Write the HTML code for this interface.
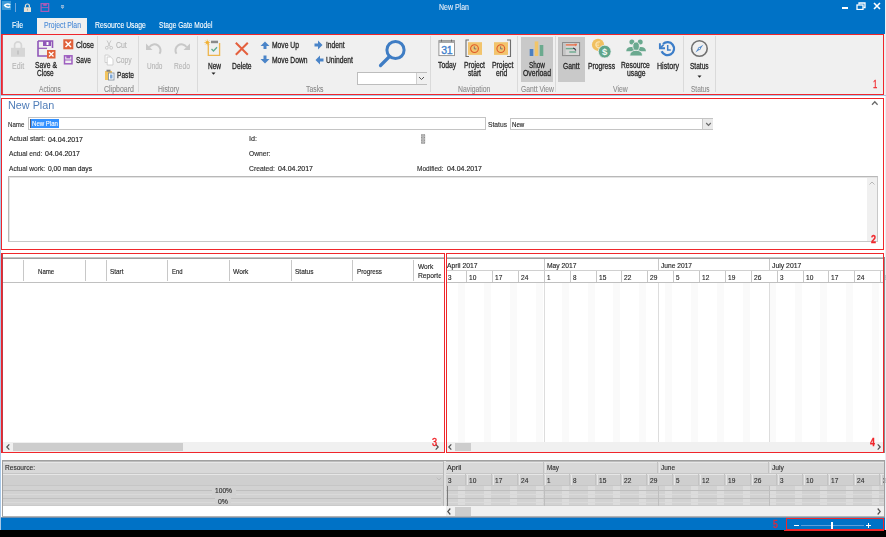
<!DOCTYPE html><html><head><meta charset="utf-8"><style>
html,body{margin:0;padding:0;}
body{width:886px;height:537px;position:relative;overflow:hidden;background:#000;font-family:"Liberation Sans",sans-serif;}
body>div{position:absolute;}
.g{-webkit-text-stroke-width:0.1px !important;}
.s{-webkit-text-stroke-width:0.15px !important;}
.t{white-space:nowrap;-webkit-text-stroke:0.28px currentColor;filter:blur(0.25px);}
</style></head><body>
<div style="left:0px;top:0px;width:886px;height:537px;background:#000;"></div>
<div style="left:0px;top:0px;width:886px;height:530px;background:#FFFFFF;"></div>
<div style="left:1px;top:0px;width:884px;height:34px;background:#0072C6;"></div>
<div style="left:0px;top:0px;width:1px;height:530px;background:#A7C7E7;"></div>
<div style="left:885px;top:0px;width:1px;height:530px;background:#E8EEF4;"></div>
<div style="left:2px;top:1px;width:9px;height:9px;background:#3D9AD6;"></div>
<svg style="position:absolute;left:2px;top:1px;" width="9" height="9" viewBox="0 0 9 9"><path d="M8.2 4 C7 2.6 4.2 2.4 2.6 4.2 C4 6.2 6.6 6.6 8.2 5.6" fill="none" stroke="#FFF" stroke-width="1.5"/></svg>
<div style="left:15px;top:3px;width:1px;height:9px;background:#6FA6DA;"></div>
<svg style="position:absolute;left:23px;top:3px;" width="10" height="10" viewBox="0 0 10 10"><rect x="0.9" y="4.3" width="7.1" height="4.7" fill="#E6E1D6"/><path d="M2.4 4.6 V3 A2 2 0 0 1 6.4 3 V4.6" fill="none" stroke="#E6E1D6" stroke-width="1.2"/><rect x="4" y="5.6" width="0.9" height="2" fill="#A8A49C"/></svg>
<svg style="position:absolute;left:40px;top:3px;" width="10" height="10" viewBox="0 0 10 10"><rect x="1.1" y="0.6" width="7.6" height="7.8" fill="none" stroke="#A95BB8" stroke-width="1.2"/><rect x="3.2" y="0.6" width="3.6" height="2.2" fill="#A95BB8"/><line x1="1.1" y1="4.6" x2="8.7" y2="4.6" stroke="#A95BB8" stroke-width="0.9"/></svg>
<svg style="position:absolute;left:59px;top:4px;" width="6" height="6" viewBox="0 0 6 6"><path d="M2 2.8 L5 2.8 L3.5 4.6 Z" fill="#8AA8C8" stroke="#C8D8EA" stroke-width="0.5"/><line x1="2" y1="1.5" x2="5" y2="1.5" stroke="#C8D4E4" stroke-width="0.7"/></svg>
<div class="t g" style="left:439.00px;top:4.00px;font-size:8.2px;line-height:8.2px;color:#E6EEF8;transform:scaleX(0.855);transform-origin:0 0;">New Plan</div>
<div style="left:842px;top:7px;width:6px;height:2px;background:#FFFFFF;"></div>
<svg style="position:absolute;left:856px;top:2px;" width="10" height="8" viewBox="0 0 10 8"><rect x="1" y="3" width="6" height="4.5" fill="none" stroke="#FFF" stroke-width="1.3"/><path d="M3 2.5 V1 H9 V5.5 H7.5" fill="none" stroke="#FFF" stroke-width="1.3"/></svg>
<svg style="position:absolute;left:873px;top:2px;" width="8" height="8" viewBox="0 0 8 8"><path d="M1 1 L7 7 M7 1 L1 7" stroke="#FFF" stroke-width="1.6"/></svg>
<div class="t g" style="left:11.90px;top:22.00px;font-size:8.2px;line-height:8.2px;color:#FFFFFF;transform:scaleX(0.848);transform-origin:0 0;">File</div>
<div style="left:37px;top:18px;width:50px;height:16px;background:#F0F0F0;"></div>
<div class="t g" style="left:43.80px;top:22.00px;font-size:8.2px;line-height:8.2px;color:#4A8AD6;transform:scaleX(0.837);transform-origin:0 0;">Project Plan</div>
<div class="t g" style="left:94.60px;top:22.00px;font-size:8.2px;line-height:8.2px;color:#FFFFFF;transform:scaleX(0.835);transform-origin:0 0;">Resource Usage</div>
<div class="t g" style="left:159.30px;top:22.00px;font-size:8.2px;line-height:8.2px;color:#FFFFFF;transform:scaleX(0.809);transform-origin:0 0;">Stage Gate Model</div>
<div style="left:1px;top:34px;width:884px;height:61px;background:#F0F0F0;"></div>
<div style="left:0px;top:95px;width:886px;height:1px;background:#A9C6E6;"></div>
<div style="left:97px;top:36px;width:1px;height:56px;background:#DADADA;"></div>
<div style="left:138px;top:36px;width:1px;height:56px;background:#DADADA;"></div>
<div style="left:197px;top:36px;width:1px;height:56px;background:#DADADA;"></div>
<div style="left:430px;top:36px;width:1px;height:56px;background:#DADADA;"></div>
<div style="left:517px;top:36px;width:1px;height:56px;background:#DADADA;"></div>
<div style="left:555px;top:36px;width:1px;height:56px;background:#DADADA;"></div>
<div style="left:683px;top:36px;width:1px;height:56px;background:#DADADA;"></div>
<div style="left:715px;top:36px;width:1px;height:56px;background:#DADADA;"></div>
<div style="left:521px;top:37px;width:32px;height:45px;background:#C9C9C9;"></div>
<div style="left:558px;top:37px;width:27px;height:45px;background:#C9C9C9;"></div>
<div class="t g" style="left:38.70px;top:85.00px;font-size:8.4px;line-height:8.4px;color:#8A8A8A;transform:scaleX(0.798);transform-origin:0 0;">Actions</div>
<div class="t g" style="left:103.60px;top:85.00px;font-size:8.4px;line-height:8.4px;color:#8A8A8A;transform:scaleX(0.834);transform-origin:0 0;">Clipboard</div>
<div class="t g" style="left:158.00px;top:85.00px;font-size:8.4px;line-height:8.4px;color:#8A8A8A;transform:scaleX(0.815);transform-origin:0 0;">History</div>
<div class="t g" style="left:306.00px;top:85.00px;font-size:8.4px;line-height:8.4px;color:#8A8A8A;transform:scaleX(0.820);transform-origin:0 0;">Tasks</div>
<div class="t g" style="left:458.40px;top:85.00px;font-size:8.4px;line-height:8.4px;color:#8A8A8A;transform:scaleX(0.816);transform-origin:0 0;">Navigation</div>
<div class="t g" style="left:520.50px;top:85.00px;font-size:8.4px;line-height:8.4px;color:#8A8A8A;transform:scaleX(0.806);transform-origin:0 0;">Gantt View</div>
<div class="t g" style="left:613.00px;top:85.00px;font-size:8.4px;line-height:8.4px;color:#8A8A8A;transform:scaleX(0.814);transform-origin:0 0;">View</div>
<div class="t g" style="left:690.50px;top:85.00px;font-size:8.4px;line-height:8.4px;color:#8A8A8A;transform:scaleX(0.777);transform-origin:0 0;">Status</div>
<svg style="position:absolute;left:10px;top:40px;" width="16" height="18" viewBox="0 0 16 18"><rect x="1" y="7.8" width="14" height="9" fill="#D6D6D6"/><path d="M4.6 8 V5.3 A3.4 3.4 0 0 1 11.4 5.3 V8" fill="none" stroke="#D6D6D6" stroke-width="1.7"/><rect x="7.3" y="10.5" width="1.4" height="4" fill="#BDBDBD"/></svg>
<div class="t g" style="left:11.50px;top:62.00px;font-size:8.4px;line-height:8.4px;color:#B4B4B4;transform:scaleX(0.842);transform-origin:0 0;">Edit</div>
<svg style="position:absolute;left:37px;top:40px;" width="20" height="20" viewBox="0 0 20 20"><path d="M1 1 H15.5 V8" fill="none" stroke="#9057B8" stroke-width="1.6"/><path d="M1 1 V16 H10" fill="none" stroke="#9057B8" stroke-width="1.6"/><rect x="6" y="1" width="8" height="5" fill="#9057B8"/><rect x="9.5" y="2" width="2" height="3" fill="#FFF"/><line x1="1" y1="8.3" x2="10" y2="8.3" stroke="#9057B8" stroke-width="1.2"/><rect x="10" y="10" width="8.5" height="8.5" fill="#E0603A"/><path d="M12 12 L16.5 16.5 M16.5 12 L12 16.5" stroke="#FFF" stroke-width="1.3"/></svg>
<div class="t" style="left:34.60px;top:61.00px;font-size:8.4px;line-height:8.4px;color:#262626;transform:scaleX(0.812);transform-origin:0 0;">Save &amp;</div>
<div class="t" style="left:37.00px;top:69.00px;font-size:8.4px;line-height:8.4px;color:#262626;transform:scaleX(0.778);transform-origin:0 0;">Close</div>
<svg style="position:absolute;left:63px;top:39px;" width="11" height="11" viewBox="0 0 11 11"><rect x="0.3" y="0.3" width="10" height="10" fill="#E0603A"/><path d="M2.5 2.5 L8 8 M8 2.5 L2.5 8" stroke="#FFF" stroke-width="1.5"/></svg>
<div class="t" style="left:75.60px;top:41.00px;font-size:8.4px;line-height:8.4px;color:#262626;transform:scaleX(0.839);transform-origin:0 0;">Close</div>
<svg style="position:absolute;left:63px;top:55px;" width="10" height="10" viewBox="0 0 10 10"><rect x="1.5" y="0.8" width="7.5" height="8" fill="none" stroke="#9E5FC0" stroke-width="1.5"/><rect x="3.3" y="0.8" width="4" height="2.6" fill="#9E5FC0"/><line x1="1.5" y1="5" x2="9" y2="5" stroke="#9E5FC0" stroke-width="1"/></svg>
<div class="t" style="left:76.00px;top:56.00px;font-size:8.4px;line-height:8.4px;color:#262626;transform:scaleX(0.783);transform-origin:0 0;">Save</div>
<svg style="position:absolute;left:104px;top:40px;" width="10" height="10" viewBox="0 0 10 10"><path d="M3 0.5 L6.3 6.8 M7 0.5 L3.7 6.8" stroke="#C4C4C4" stroke-width="0.9" fill="none"/><circle cx="2.8" cy="7.8" r="1.4" fill="none" stroke="#C4C4C4" stroke-width="0.9"/><circle cx="7.2" cy="7.8" r="1.4" fill="none" stroke="#C4C4C4" stroke-width="0.9"/></svg>
<div class="t g" style="left:116.00px;top:41.00px;font-size:8.4px;line-height:8.4px;color:#B4B4B4;transform:scaleX(0.827);transform-origin:0 0;">Cut</div>
<svg style="position:absolute;left:104px;top:54px;" width="10" height="12" viewBox="0 0 10 12"><path d="M1 1 H4.5 L6.5 3 V8.5 H1 Z" fill="#FAFAFA" stroke="#C8C8C8" stroke-width="0.8"/><path d="M3.2 3 H6.7 L9 5.3 V11 H3.2 Z" fill="#FFF" stroke="#C8C8C8" stroke-width="0.8"/></svg>
<div class="t g" style="left:116.00px;top:56.00px;font-size:8.4px;line-height:8.4px;color:#B4B4B4;transform:scaleX(0.800);transform-origin:0 0;">Copy</div>
<svg style="position:absolute;left:104px;top:69px;" width="11" height="12" viewBox="0 0 11 12"><rect x="1" y="2" width="7" height="9" fill="#F2C45E"/><rect x="2.5" y="0.7" width="4" height="2" fill="#808080"/><rect x="4.5" y="4" width="5.5" height="7" fill="#FFF" stroke="#7A8A9A" stroke-width="0.8"/><rect x="6" y="5.5" width="2.5" height="4" fill="#7FA8D8"/></svg>
<div class="t" style="left:116.50px;top:71.00px;font-size:8.4px;line-height:8.4px;color:#262626;transform:scaleX(0.792);transform-origin:0 0;">Paste</div>
<svg style="position:absolute;left:145px;top:41px;" width="18" height="15" viewBox="0 0 18 15"><path d="M4.5 6 A6 6 0 1 1 14.5 12.8" fill="none" stroke="#C8C8C8" stroke-width="2"/><path d="M1 2.5 L1 9 L7.5 9 Z" fill="#C8C8C8"/></svg>
<div class="t g" style="left:146.80px;top:62.00px;font-size:8.4px;line-height:8.4px;color:#B4B4B4;transform:scaleX(0.772);transform-origin:0 0;">Undo</div>
<svg style="position:absolute;left:173px;top:41px;" width="18" height="15" viewBox="0 0 18 15"><path d="M13.5 6 A6 6 0 1 0 3.5 12.8" fill="none" stroke="#C8C8C8" stroke-width="2"/><path d="M17 2.5 L17 9 L10.5 9 Z" fill="#C8C8C8"/></svg>
<div class="t g" style="left:174.20px;top:62.00px;font-size:8.4px;line-height:8.4px;color:#B4B4B4;transform:scaleX(0.792);transform-origin:0 0;">Redo</div>
<svg style="position:absolute;left:203px;top:38px;" width="19" height="19" viewBox="0 0 19 19"><circle cx="4.3" cy="4.5" r="1.5" fill="#F2B134"/><path d="M4.3 1.6 V7.4 M1.4 4.5 H7.2 M2.3 2.5 L6.3 6.5 M6.3 2.5 L2.3 6.5" stroke="#F2B134" stroke-width="0.7"/><path d="M5.3 5 V17.4 H16.6 V5" fill="none" stroke="#EDB64E" stroke-width="1.3"/><rect x="8" y="2.7" width="7" height="2.5" fill="#8A8A8A"/><path d="M8.5 11 L10.5 13 L14 9.3" fill="none" stroke="#5EAA8C" stroke-width="1.3"/></svg>
<div class="t" style="left:207.80px;top:62.00px;font-size:8.4px;line-height:8.4px;color:#262626;transform:scaleX(0.778);transform-origin:0 0;">New</div>
<svg style="position:absolute;left:211px;top:72px;" width="5" height="3" viewBox="0 0 5 3"><path d="M0.5 0.5 H4.5 L2.5 2.8 Z" fill="#222"/></svg>
<svg style="position:absolute;left:234px;top:41px;" width="16" height="16" viewBox="0 0 16 16"><path d="M1.8 1.8 L13.8 13.8 M13.8 1.8 L1.8 13.8" stroke="#E4603E" stroke-width="2"/></svg>
<div class="t" style="left:232.00px;top:62.00px;font-size:8.4px;line-height:8.4px;color:#262626;transform:scaleX(0.807);transform-origin:0 0;">Delete</div>
<svg style="position:absolute;left:260px;top:40.5px;" width="10" height="9" viewBox="0 0 10 9"><path d="M5 0.5 L9.5 5 H6.5 V8 H3.5 V5 H0.5 Z" fill="#4A84C8"/></svg>
<div class="t" style="left:271.80px;top:41.00px;font-size:8.4px;line-height:8.4px;color:#262626;transform:scaleX(0.804);transform-origin:0 0;">Move Up</div>
<svg style="position:absolute;left:260px;top:55px;" width="10" height="9" viewBox="0 0 10 9"><path d="M5 8.5 L9.5 4 H6.5 V0.5 H3.5 V4 H0.5 Z" fill="#4A84C8"/></svg>
<div class="t" style="left:271.80px;top:56.00px;font-size:8.4px;line-height:8.4px;color:#262626;transform:scaleX(0.803);transform-origin:0 0;">Move Down</div>
<svg style="position:absolute;left:314px;top:40px;" width="9" height="10" viewBox="0 0 9 10"><path d="M8.5 5 L4 0.5 V3.5 H0.5 V6.5 H4 V9.5 Z" fill="#4A84C8"/></svg>
<div class="t" style="left:326.00px;top:41.00px;font-size:8.4px;line-height:8.4px;color:#262626;transform:scaleX(0.797);transform-origin:0 0;">Indent</div>
<svg style="position:absolute;left:315px;top:55px;" width="9" height="10" viewBox="0 0 9 10"><path d="M0.5 5 L5 0.5 V3.5 H8.5 V6.5 H5 V9.5 Z" fill="#4A84C8"/></svg>
<div class="t" style="left:326.00px;top:56.00px;font-size:8.4px;line-height:8.4px;color:#262626;transform:scaleX(0.803);transform-origin:0 0;">Unindent</div>
<svg style="position:absolute;left:377px;top:39px;" width="32" height="30" viewBox="0 0 32 30"><circle cx="18.5" cy="11" r="8.6" fill="none" stroke="#3F7DC4" stroke-width="3"/><path d="M12.5 17.5 L3.5 26.5" stroke="#3F7DC4" stroke-width="3.2" stroke-linecap="round"/></svg>
<div style="left:357px;top:72px;width:70px;height:13px;box-sizing:border-box;border:1px solid #BDBDBD;background:#FFF;"></div>
<div style="left:416px;top:73px;width:10px;height:11px;background:#F0F0F0;border-left:1px solid #D0D0D0"></div>
<svg style="position:absolute;left:418px;top:76px;" width="7" height="5" viewBox="0 0 7 5"><path d="M1 1 L3.5 3.5 L6 1" fill="none" stroke="#555" stroke-width="1"/></svg>
<svg style="position:absolute;left:438px;top:39px;" width="18" height="18" viewBox="0 0 18 18"><rect x="0.9" y="1.6" width="15.6" height="15" fill="#FFF" stroke="#8C8C8C" stroke-width="0.9"/><rect x="0.9" y="1.6" width="15.6" height="2.4" fill="#A8A8A8"/><rect x="3" y="0.6" width="1" height="2" fill="#6A6A6A"/><rect x="13" y="0.6" width="1" height="2" fill="#6A6A6A"/><text x="8.7" y="14.8" font-size="10.5" font-family="Liberation Sans" fill="#3F7FCC" text-anchor="middle" letter-spacing="-0.3" stroke="#3F7FCC" stroke-width="0.35">31</text></svg>
<div class="t" style="left:437.80px;top:61.00px;font-size:8.4px;line-height:8.4px;color:#262626;transform:scaleX(0.811);transform-origin:0 0;">Today</div>
<svg style="position:absolute;left:465px;top:39px;" width="19" height="19" viewBox="0 0 19 19"><path d="M4 1 H1 V17.5 H4" fill="none" stroke="#6E6E6E" stroke-width="1.1"/><rect x="3" y="3.2" width="14" height="12.7" fill="#F2C46D"/><circle cx="9.5" cy="9.6" r="3.9" fill="none" stroke="#E05A2A" stroke-width="1.1"/><path d="M9.3 7.4 V9.9 H11.3" fill="none" stroke="#606070" stroke-width="0.8"/></svg>
<div class="t" style="left:464.00px;top:61.00px;font-size:8.4px;line-height:8.4px;color:#262626;transform:scaleX(0.804);transform-origin:0 0;">Project</div>
<div class="t" style="left:468.00px;top:69.00px;font-size:8.4px;line-height:8.4px;color:#262626;transform:scaleX(0.796);transform-origin:0 0;">start</div>
<svg style="position:absolute;left:493px;top:39px;" width="19" height="19" viewBox="0 0 19 19"><path d="M14 1 H17.5 V17.5 H14" fill="none" stroke="#6E6E6E" stroke-width="1.1"/><rect x="1" y="3.2" width="14" height="12.7" fill="#F2C46D"/><circle cx="7.8" cy="9.6" r="3.9" fill="none" stroke="#E05A2A" stroke-width="1.1"/><path d="M7.6 7.4 V9.9 H9.6" fill="none" stroke="#606070" stroke-width="0.8"/></svg>
<div class="t" style="left:491.60px;top:61.00px;font-size:8.4px;line-height:8.4px;color:#262626;transform:scaleX(0.819);transform-origin:0 0;">Project</div>
<div class="t" style="left:496.00px;top:69.00px;font-size:8.4px;line-height:8.4px;color:#262626;transform:scaleX(0.813);transform-origin:0 0;">end</div>
<svg style="position:absolute;left:529px;top:41px;" width="15" height="16" viewBox="0 0 15 16"><rect x="0.7" y="8" width="3.6" height="7" fill="#4A7FC1"/><rect x="5.7" y="0.4" width="3.6" height="14.6" fill="#F1C56A"/><rect x="10.7" y="4" width="3.6" height="11" fill="#6BAA8E"/></svg>
<div class="t" style="left:528.50px;top:61.00px;font-size:8.4px;line-height:8.4px;color:#262626;transform:scaleX(0.760);transform-origin:0 0;">Show</div>
<div class="t" style="left:522.70px;top:69.00px;font-size:8.4px;line-height:8.4px;color:#262626;transform:scaleX(0.824);transform-origin:0 0;">Overload</div>
<svg style="position:absolute;left:562px;top:41px;" width="19" height="16" viewBox="0 0 19 16"><rect x="0.6" y="1.6" width="17" height="13" fill="#D6D6D6" stroke="#858585" stroke-width="1"/><rect x="1.1" y="2.1" width="2.6" height="12" fill="#C4C4C4"/><rect x="3.8" y="3.2" width="10.5" height="1.4" fill="#E8704A"/><path d="M12.3 2.8 L15.3 2.8 L13.8 5.6 Z" fill="#E8704A"/><rect x="3.8" y="6.9" width="7.5" height="1.4" fill="#6BAA8E"/><path d="M11 7.2 Q13 7.2 13.8 9.5" fill="none" stroke="#3A3A48" stroke-width="1.2"/><rect x="7.3" y="10.3" width="6.8" height="1.4" fill="#6BAA8E"/></svg>
<div class="t" style="left:563.40px;top:62.00px;font-size:8.4px;line-height:8.4px;color:#262626;transform:scaleX(0.808);transform-origin:0 0;">Gantt</div>
<svg style="position:absolute;left:590px;top:37px;" width="23" height="22" viewBox="0 0 23 22"><circle cx="8" cy="7.8" r="6.1" fill="#F0C060"/><path d="M10 5 A3 3 0 1 0 10 10.6" fill="none" stroke="#FAE3B0" stroke-width="1.2"/><path d="M5.4 7 H9 M5.4 8.6 H9" stroke="#FAE3B0" stroke-width="0.7"/><circle cx="14.7" cy="14.6" r="6.4" fill="#5FA58A" stroke="#F0F0F0" stroke-width="0.8"/><text x="14.7" y="18.2" font-size="9.5" font-family="Liberation Sans" fill="#F4FAF6" text-anchor="middle" font-weight="bold">$</text></svg>
<div class="t" style="left:588.40px;top:62.00px;font-size:8.4px;line-height:8.4px;color:#262626;transform:scaleX(0.810);transform-origin:0 0;">Progress</div>
<svg style="position:absolute;left:625px;top:38px;" width="22" height="19" viewBox="0 0 22 19"><circle cx="6.9" cy="3.9" r="2.5" fill="#6AA98F"/><circle cx="15.2" cy="3.9" r="2.5" fill="#6AA98F"/><path d="M1.2 13.2 Q1.6 9 6 9 L16 9 Q20.5 9 21 13.2 Z" fill="#6AA98F"/><ellipse cx="11.1" cy="8.2" rx="3.3" ry="4.3" fill="#6AA98F" stroke="#F0F0F0" stroke-width="0.9"/><path d="M4.6 18 Q5 12.3 11.1 12.3 Q17.2 12.3 17.7 18 Z" fill="#6AA98F" stroke="#F0F0F0" stroke-width="0.9"/></svg>
<div class="t" style="left:621.40px;top:61.00px;font-size:8.4px;line-height:8.4px;color:#262626;transform:scaleX(0.801);transform-origin:0 0;">Resource</div>
<div class="t" style="left:626.80px;top:69.00px;font-size:8.4px;line-height:8.4px;color:#262626;transform:scaleX(0.813);transform-origin:0 0;">usage</div>
<svg style="position:absolute;left:658px;top:39px;" width="19" height="19" viewBox="0 0 19 19"><path d="M5 5 A6.5 6.5 0 1 1 3.6 12.3" fill="none" stroke="#3D7EC9" stroke-width="2.3"/><path d="M5.6 5.6 L2.6 8.6" stroke="#3D7EC9" stroke-width="1.6"/><path d="M1.9 4.2 V9.3 H7" fill="none" stroke="#3D7EC9" stroke-width="1.9"/><path d="M9.7 6 V10.9 H12.8" fill="none" stroke="#3D7EC9" stroke-width="1.5"/></svg>
<div class="t" style="left:656.50px;top:62.00px;font-size:8.4px;line-height:8.4px;color:#262626;transform:scaleX(0.846);transform-origin:0 0;">History</div>
<svg style="position:absolute;left:690px;top:39px;" width="19" height="19" viewBox="0 0 19 19"><circle cx="9.4" cy="9.5" r="7.8" fill="none" stroke="#707070" stroke-width="1.6"/><path d="M13.4 5.5 L10.2 10.3 L5.4 13.5 L8.6 8.7 Z" fill="#4A84C8"/><circle cx="9.4" cy="9.5" r="1.1" fill="#F0F0F0" stroke="#4A84C8" stroke-width="0.7"/></svg>
<div class="t" style="left:689.70px;top:62.00px;font-size:8.4px;line-height:8.4px;color:#262626;transform:scaleX(0.781);transform-origin:0 0;">Status</div>
<svg style="position:absolute;left:697px;top:75px;" width="5" height="3" viewBox="0 0 5 3"><path d="M0.5 0.5 H4.5 L2.5 2.8 Z" fill="#222"/></svg>
<div class="t" style="left:7.50px;top:100.00px;font-size:11px;line-height:11px;color:#4F7DB8;transform:scaleX(0.983);transform-origin:0 0;-webkit-text-stroke:0">New Plan</div>
<svg style="position:absolute;left:871px;top:100px;" width="8" height="6" viewBox="0 0 8 6"><path d="M1 4.8 L3.8 1.8 L6.6 4.8" fill="none" stroke="#6A6A6A" stroke-width="1.3"/></svg>
<div class="t s" style="left:7.90px;top:121.00px;font-size:7.6px;line-height:7.6px;color:#303030;transform:scaleX(0.808);transform-origin:0 0;">Name</div>
<div style="left:28px;top:117px;width:458px;height:13px;box-sizing:border-box;border:1px solid #C4C4C4;background:#FFF;"></div>
<div style="left:31px;top:119px;width:28px;height:9px;background:#3391FF;"></div>
<div style="left:30px;top:119px;width:1px;height:9px;background:#5A5A70;"></div>
<div class="t g" style="left:31.50px;top:120.00px;font-size:7.6px;line-height:7.6px;color:#FFFFFF;transform:scaleX(0.799);transform-origin:0 0;">New Plan</div>
<div class="t s" style="left:488.00px;top:121.00px;font-size:7.6px;line-height:7.6px;color:#303030;transform:scaleX(0.882);transform-origin:0 0;">Status</div>
<div style="left:510px;top:118px;width:203px;height:12px;box-sizing:border-box;border:1px solid #C4C4C4;background:#FFF;"></div>
<div style="left:702px;top:119px;width:10px;height:10px;background:#EAEAEA;border-left:1px solid #C8C8C8"></div>
<svg style="position:absolute;left:704.5px;top:121.5px;" width="7" height="5" viewBox="0 0 7 5"><path d="M1.2 1 L3.5 3.3 L5.8 1" fill="none" stroke="#6A6A6A" stroke-width="1.2"/></svg>
<div class="t s" style="left:512.40px;top:121.00px;font-size:7.6px;line-height:7.6px;color:#202020;transform:scaleX(0.807);transform-origin:0 0;">New</div>
<div class="t s" style="left:8.50px;top:135.00px;font-size:7.6px;line-height:7.6px;color:#303030;transform:scaleX(0.900);transform-origin:0 0;">Actual start:</div>
<div class="t s" style="left:48.00px;top:136.00px;font-size:7.6px;line-height:7.6px;color:#202020;transform:scaleX(0.920);transform-origin:0 0;">04.04.2017</div>
<div class="t s" style="left:8.50px;top:150.00px;font-size:7.6px;line-height:7.6px;color:#303030;transform:scaleX(0.875);transform-origin:0 0;">Actual end:</div>
<div class="t s" style="left:45.00px;top:150.00px;font-size:7.6px;line-height:7.6px;color:#202020;transform:scaleX(0.920);transform-origin:0 0;">04.04.2017</div>
<div class="t s" style="left:8.50px;top:165.00px;font-size:7.6px;line-height:7.6px;color:#303030;transform:scaleX(0.872);transform-origin:0 0;">Actual work:</div>
<div class="t s" style="left:48.00px;top:165.00px;font-size:7.6px;line-height:7.6px;color:#202020;transform:scaleX(0.883);transform-origin:0 0;">0,00 man days</div>
<div class="t s" style="left:249.00px;top:135.00px;font-size:7.6px;line-height:7.6px;color:#303030;transform:scaleX(0.948);transform-origin:0 0;">Id:</div>
<div class="t s" style="left:249.00px;top:150.00px;font-size:7.6px;line-height:7.6px;color:#303030;transform:scaleX(0.877);transform-origin:0 0;">Owner:</div>
<div class="t s" style="left:249.00px;top:165.00px;font-size:7.6px;line-height:7.6px;color:#303030;transform:scaleX(0.892);transform-origin:0 0;">Created:</div>
<div class="t s" style="left:278.40px;top:165.00px;font-size:7.6px;line-height:7.6px;color:#202020;transform:scaleX(0.920);transform-origin:0 0;">04.04.2017</div>
<div class="t s" style="left:417.00px;top:165.00px;font-size:7.6px;line-height:7.6px;color:#303030;transform:scaleX(0.859);transform-origin:0 0;">Modified:</div>
<div class="t s" style="left:447.00px;top:165.00px;font-size:7.6px;line-height:7.6px;color:#202020;transform:scaleX(0.920);transform-origin:0 0;">04.04.2017</div>
<svg style="position:absolute;left:420px;top:133px;" width="6" height="12" viewBox="0 0 6 12"><rect x="1" y="1" width="4.2" height="10" rx="1" fill="#B8B8B8"/><g fill="#8E8E8E"><rect x="1.2" y="1.5" width="1" height="1"/><rect x="4" y="1.5" width="1" height="1"/><rect x="1.2" y="4" width="1" height="1"/><rect x="4" y="4" width="1" height="1"/><rect x="1.2" y="6.8" width="1" height="1"/><rect x="4" y="6.8" width="1" height="1"/><rect x="1.2" y="9.3" width="1" height="1"/><rect x="4" y="9.3" width="1" height="1"/></g></svg>
<div style="left:8px;top:176px;width:870px;height:66px;box-sizing:border-box;border:1px solid #C8C8C8;background:#FFF;border-top-color:#B8B8B8;border-left-color:#B8B8B8"></div>
<div style="left:9px;top:177px;width:868px;height:1px;background:#E4E4E4;"></div>
<div style="left:9px;top:177px;width:1px;height:64px;background:#E4E4E4;"></div>
<div style="left:867px;top:178px;width:10px;height:63px;background:#F0F0F0;"></div>
<svg style="position:absolute;left:868px;top:180px;" width="8" height="6" viewBox="0 0 8 6"><path d="M1.5 4.5 L4 2 L6.5 4.5" fill="none" stroke="#B0B0B0" stroke-width="0.9"/></svg>
<div style="left:1px;top:98px;width:883px;height:152px;box-sizing:border-box;border:1px solid #F0262B;background:transparent;"></div>
<div class="t" style="left:871.20px;top:234.00px;font-size:10.5px;line-height:10.5px;color:#F0262B;transform:scaleX(0.858);transform-origin:0 0;font-weight:bold">2</div>
<div style="left:2px;top:257px;width:442px;height:1px;background:#C4C4C4;"></div>
<div style="left:2px;top:258px;width:442px;height:1px;background:#A0A0A0;"></div>
<div style="left:2px;top:259px;width:442px;height:23px;background:#FFFFFF;"></div>
<div style="left:2px;top:282px;width:442px;height:1px;background:#C0C0C0;"></div>
<div style="left:23px;top:260px;width:1px;height:21px;background:#C8C8C8;"></div>
<div style="left:85px;top:260px;width:1px;height:21px;background:#C8C8C8;"></div>
<div style="left:106px;top:260px;width:1px;height:21px;background:#C8C8C8;"></div>
<div style="left:167px;top:260px;width:1px;height:21px;background:#C8C8C8;"></div>
<div style="left:229px;top:260px;width:1px;height:21px;background:#C8C8C8;"></div>
<div style="left:291px;top:260px;width:1px;height:21px;background:#C8C8C8;"></div>
<div style="left:352px;top:260px;width:1px;height:21px;background:#C8C8C8;"></div>
<div style="left:413px;top:260px;width:1px;height:21px;background:#C8C8C8;"></div>
<div class="t s" style="left:38.00px;top:268.00px;font-size:7.6px;line-height:7.6px;color:#262626;transform:scaleX(0.803);transform-origin:0 0;">Name</div>
<div class="t s" style="left:110.00px;top:268.00px;font-size:7.6px;line-height:7.6px;color:#262626;transform:scaleX(0.842);transform-origin:0 0;">Start</div>
<div class="t s" style="left:172.00px;top:268.00px;font-size:7.6px;line-height:7.6px;color:#262626;transform:scaleX(0.776);transform-origin:0 0;">End</div>
<div class="t s" style="left:233.40px;top:268.00px;font-size:7.6px;line-height:7.6px;color:#262626;transform:scaleX(0.879);transform-origin:0 0;">Work</div>
<div class="t s" style="left:294.80px;top:268.00px;font-size:7.6px;line-height:7.6px;color:#262626;transform:scaleX(0.859);transform-origin:0 0;">Status</div>
<div class="t s" style="left:356.50px;top:268.00px;font-size:7.6px;line-height:7.6px;color:#262626;transform:scaleX(0.822);transform-origin:0 0;">Progress</div>
<div class="t s" style="left:418.00px;top:263.00px;font-size:7.6px;line-height:7.6px;color:#262626;transform:scaleX(0.868);transform-origin:0 0;">Work</div>
<div class="t s" style="left:418.00px;top:272.00px;font-size:7.6px;line-height:7.6px;color:#262626;transform:scaleX(0.887);transform-origin:0 0;clip-path:inset(0 1px 0 0)">Reporte</div>
<div style="left:2px;top:442px;width:442px;height:10px;background:#F0F0F0;"></div>
<div style="left:13px;top:443px;width:170px;height:8px;background:#CDCDCD;"></div>
<svg style="position:absolute;left:5px;top:443px;" width="6" height="8" viewBox="0 0 6 8"><path d="M4.3 1.3 L1.8 4 L4.3 6.7" fill="none" stroke="#505050" stroke-width="1.2"/></svg>
<svg style="position:absolute;left:434px;top:442.5px;" width="6" height="8" viewBox="0 0 6 8"><path d="M1.7 1.3 L4.2 4 L1.7 6.7" fill="none" stroke="#505050" stroke-width="1.2"/></svg>
<div style="left:2px;top:254px;width:1px;height:198px;background:#C23A48;"></div>
<div style="left:1px;top:253px;width:444px;height:200px;box-sizing:border-box;border:1px solid #F0262B;background:transparent;"></div>
<div class="t" style="left:431.50px;top:438.00px;font-size:10px;line-height:10px;color:#F0262B;transform:scaleX(0.901);transform-origin:0 0;-webkit-text-stroke:0.4px currentColor">3</div>
<div style="left:447px;top:257px;width:437px;height:1px;background:#C4C4C4;"></div>
<div style="left:447px;top:258px;width:437px;height:1px;background:#A0A0A0;"></div>
<div style="left:447px;top:270px;width:437px;height:1px;background:#D0D0D0;"></div>
<div style="left:447px;top:282px;width:437px;height:1px;background:#C0C0C0;"></div>
<div style="left:458px;top:283px;width:7px;height:159px;background:#FAFAFA;"></div>
<div style="left:484px;top:283px;width:7px;height:159px;background:#FAFAFA;"></div>
<div style="left:510px;top:283px;width:7px;height:159px;background:#FAFAFA;"></div>
<div style="left:536px;top:283px;width:7px;height:159px;background:#FAFAFA;"></div>
<div style="left:562px;top:283px;width:7px;height:159px;background:#FAFAFA;"></div>
<div style="left:588px;top:283px;width:7px;height:159px;background:#FAFAFA;"></div>
<div style="left:613px;top:283px;width:7px;height:159px;background:#FAFAFA;"></div>
<div style="left:639px;top:283px;width:7px;height:159px;background:#FAFAFA;"></div>
<div style="left:665px;top:283px;width:7px;height:159px;background:#FAFAFA;"></div>
<div style="left:691px;top:283px;width:7px;height:159px;background:#FAFAFA;"></div>
<div style="left:717px;top:283px;width:7px;height:159px;background:#FAFAFA;"></div>
<div style="left:743px;top:283px;width:7px;height:159px;background:#FAFAFA;"></div>
<div style="left:769px;top:283px;width:7px;height:159px;background:#FAFAFA;"></div>
<div style="left:795px;top:283px;width:7px;height:159px;background:#FAFAFA;"></div>
<div style="left:820px;top:283px;width:7px;height:159px;background:#FAFAFA;"></div>
<div style="left:846px;top:283px;width:7px;height:159px;background:#FAFAFA;"></div>
<div style="left:872px;top:283px;width:7px;height:159px;background:#FAFAFA;"></div>
<div style="left:466px;top:271px;width:1px;height:11px;background:#C8C8C8;"></div>
<div style="left:492px;top:271px;width:1px;height:11px;background:#C8C8C8;"></div>
<div style="left:518px;top:271px;width:1px;height:11px;background:#C8C8C8;"></div>
<div style="left:544px;top:271px;width:1px;height:11px;background:#C8C8C8;"></div>
<div style="left:570px;top:271px;width:1px;height:11px;background:#C8C8C8;"></div>
<div style="left:596px;top:271px;width:1px;height:11px;background:#C8C8C8;"></div>
<div style="left:621px;top:271px;width:1px;height:11px;background:#C8C8C8;"></div>
<div style="left:647px;top:271px;width:1px;height:11px;background:#C8C8C8;"></div>
<div style="left:673px;top:271px;width:1px;height:11px;background:#C8C8C8;"></div>
<div style="left:699px;top:271px;width:1px;height:11px;background:#C8C8C8;"></div>
<div style="left:725px;top:271px;width:1px;height:11px;background:#C8C8C8;"></div>
<div style="left:751px;top:271px;width:1px;height:11px;background:#C8C8C8;"></div>
<div style="left:777px;top:271px;width:1px;height:11px;background:#C8C8C8;"></div>
<div style="left:803px;top:271px;width:1px;height:11px;background:#C8C8C8;"></div>
<div style="left:828px;top:271px;width:1px;height:11px;background:#C8C8C8;"></div>
<div style="left:854px;top:271px;width:1px;height:11px;background:#C8C8C8;"></div>
<div style="left:880px;top:271px;width:1px;height:11px;background:#C8C8C8;"></div>
<div style="left:544px;top:259px;width:1px;height:11px;background:#C8C8C8;"></div>
<div style="left:544px;top:283px;width:1px;height:159px;background:#DDDDDD;"></div>
<div style="left:658px;top:259px;width:1px;height:11px;background:#C8C8C8;"></div>
<div style="left:658px;top:283px;width:1px;height:159px;background:#DDDDDD;"></div>
<div style="left:769px;top:259px;width:1px;height:11px;background:#C8C8C8;"></div>
<div style="left:769px;top:283px;width:1px;height:159px;background:#DDDDDD;"></div>
<div class="t s" style="left:447.00px;top:262.00px;font-size:7.6px;line-height:7.6px;color:#262626;transform:scaleX(0.894);transform-origin:0 0;">April 2017</div>
<div class="t s" style="left:546.50px;top:262.00px;font-size:7.6px;line-height:7.6px;color:#262626;transform:scaleX(0.887);transform-origin:0 0;">May 2017</div>
<div class="t s" style="left:661.00px;top:262.00px;font-size:7.6px;line-height:7.6px;color:#262626;transform:scaleX(0.876);transform-origin:0 0;">June 2017</div>
<div class="t s" style="left:771.60px;top:262.00px;font-size:7.6px;line-height:7.6px;color:#262626;transform:scaleX(0.904);transform-origin:0 0;">July 2017</div>
<div class="t s" style="left:882.80px;top:274.00px;font-size:7.6px;line-height:7.6px;color:#262626;transform:scaleX(0.830);transform-origin:0 0;clip-path:inset(0 1.5px 0 0)">3</div>
<div class="t s" style="left:447.50px;top:274.00px;font-size:7.6px;line-height:7.6px;color:#262626;transform:scaleX(0.830);transform-origin:0 0;">3</div>
<div class="t s" style="left:468.80px;top:274.00px;font-size:7.6px;line-height:7.6px;color:#262626;transform:scaleX(0.865);transform-origin:0 0;">10</div>
<div class="t s" style="left:494.80px;top:274.00px;font-size:7.6px;line-height:7.6px;color:#262626;transform:scaleX(0.865);transform-origin:0 0;">17</div>
<div class="t s" style="left:520.80px;top:274.00px;font-size:7.6px;line-height:7.6px;color:#262626;transform:scaleX(0.865);transform-origin:0 0;">24</div>
<div class="t s" style="left:546.80px;top:274.00px;font-size:7.6px;line-height:7.6px;color:#262626;transform:scaleX(0.830);transform-origin:0 0;">1</div>
<div class="t s" style="left:572.80px;top:274.00px;font-size:7.6px;line-height:7.6px;color:#262626;transform:scaleX(0.830);transform-origin:0 0;">8</div>
<div class="t s" style="left:598.80px;top:274.00px;font-size:7.6px;line-height:7.6px;color:#262626;transform:scaleX(0.865);transform-origin:0 0;">15</div>
<div class="t s" style="left:623.80px;top:274.00px;font-size:7.6px;line-height:7.6px;color:#262626;transform:scaleX(0.865);transform-origin:0 0;">22</div>
<div class="t s" style="left:649.80px;top:274.00px;font-size:7.6px;line-height:7.6px;color:#262626;transform:scaleX(0.865);transform-origin:0 0;">29</div>
<div class="t s" style="left:675.80px;top:274.00px;font-size:7.6px;line-height:7.6px;color:#262626;transform:scaleX(0.830);transform-origin:0 0;">5</div>
<div class="t s" style="left:701.80px;top:274.00px;font-size:7.6px;line-height:7.6px;color:#262626;transform:scaleX(0.865);transform-origin:0 0;">12</div>
<div class="t s" style="left:727.80px;top:274.00px;font-size:7.6px;line-height:7.6px;color:#262626;transform:scaleX(0.865);transform-origin:0 0;">19</div>
<div class="t s" style="left:753.80px;top:274.00px;font-size:7.6px;line-height:7.6px;color:#262626;transform:scaleX(0.865);transform-origin:0 0;">26</div>
<div class="t s" style="left:779.80px;top:274.00px;font-size:7.6px;line-height:7.6px;color:#262626;transform:scaleX(0.830);transform-origin:0 0;">3</div>
<div class="t s" style="left:805.80px;top:274.00px;font-size:7.6px;line-height:7.6px;color:#262626;transform:scaleX(0.865);transform-origin:0 0;">10</div>
<div class="t s" style="left:830.80px;top:274.00px;font-size:7.6px;line-height:7.6px;color:#262626;transform:scaleX(0.865);transform-origin:0 0;">17</div>
<div class="t s" style="left:856.80px;top:274.00px;font-size:7.6px;line-height:7.6px;color:#262626;transform:scaleX(0.865);transform-origin:0 0;">24</div>
<div style="left:884px;top:257px;width:1px;height:196px;background:#8C8C8C;"></div>
<div style="left:447px;top:442px;width:437px;height:10px;background:#F0F0F0;"></div>
<div style="left:455px;top:443px;width:15.5px;height:8px;background:#CDCDCD;"></div>
<svg style="position:absolute;left:447px;top:443px;" width="6" height="8" viewBox="0 0 6 8"><path d="M4.3 1.3 L1.8 4 L4.3 6.7" fill="none" stroke="#505050" stroke-width="1.2"/></svg>
<svg style="position:absolute;left:876px;top:443px;" width="6" height="8" viewBox="0 0 6 8"><path d="M1.7 1.3 L4.2 4 L1.7 6.7" fill="none" stroke="#505050" stroke-width="1.2"/></svg>
<div style="left:446px;top:253px;width:438px;height:200px;box-sizing:border-box;border:1px solid #F0262B;background:transparent;"></div>
<div class="t" style="left:869.60px;top:438.00px;font-size:10px;line-height:10px;color:#F0262B;transform:scaleX(0.883);transform-origin:0 0;font-weight:bold">4</div>
<div style="left:2px;top:460px;width:882px;height:1px;background:#A0A0A0;"></div>
<div style="left:2px;top:461px;width:882px;height:1px;background:#BCBCBC;"></div>
<div style="left:2px;top:462px;width:442px;height:1px;background:#E6E6E6;"></div>
<div style="left:2px;top:463px;width:442px;height:10px;background:#D8D8D8;"></div>
<div style="left:2px;top:473px;width:442px;height:1px;background:#C6C6C6;"></div>
<div style="left:2px;top:474px;width:442px;height:1px;background:#E6E6E6;"></div>
<div style="left:2px;top:475px;width:442px;height:10px;background:#CFCFCF;"></div>
<div style="left:2px;top:485px;width:442px;height:1px;background:#C6C6C6;"></div>
<div style="left:2px;top:486px;width:442px;height:19.5px;background:#D2D2D2;"></div>
<div style="left:3px;top:490px;width:438px;height:1px;background:#BEBEBE;"></div>
<div style="left:3px;top:494px;width:438px;height:1px;background:#DADADA;"></div>
<div style="left:3px;top:498px;width:438px;height:1px;background:#C0C0C0;"></div>
<div style="left:3px;top:502px;width:438px;height:1px;background:#DADADA;"></div>
<div style="left:3px;top:504.5px;width:438px;height:1px;background:#CACACA;"></div>
<div class="t s" style="left:4.80px;top:464.00px;font-size:7.6px;line-height:7.6px;color:#303030;transform:scaleX(0.866);transform-origin:0 0;">Resource:</div>
<div style="left:212px;top:486.5px;width:24px;height:8px;background:#D2D2D2;"></div>
<div style="left:215px;top:496px;width:16px;height:9px;background:#D2D2D2;"></div>
<div class="t s" style="left:215.00px;top:487.00px;font-size:7.6px;line-height:7.6px;color:#303030;transform:scaleX(0.874);transform-origin:0 0;">100%</div>
<div class="t s" style="left:218.00px;top:498.00px;font-size:7.6px;line-height:7.6px;color:#303030;transform:scaleX(0.911);transform-origin:0 0;">0%</div>
<svg style="position:absolute;left:436px;top:477px;" width="6" height="4" viewBox="0 0 6 4"><path d="M0.8 0.8 L3 3 L5.2 0.8" fill="none" stroke="#B8B8B8" stroke-width="0.8"/></svg>
<div style="left:2px;top:505.5px;width:442px;height:10.5px;background:#FFFFFF;"></div>
<div style="left:443px;top:461px;width:1px;height:45px;background:#B8B8B8;"></div>
<div style="left:444px;top:461px;width:2px;height:45px;background:#E0E0E0;"></div>
<div style="left:446px;top:462px;width:438px;height:1px;background:#E6E6E6;"></div>
<div style="left:446px;top:463px;width:438px;height:10px;background:#D8D8D8;"></div>
<div style="left:446px;top:473px;width:438px;height:1px;background:#C6C6C6;"></div>
<div style="left:446px;top:474px;width:438px;height:1px;background:#E6E6E6;"></div>
<div style="left:446px;top:475px;width:438px;height:10px;background:#CFCFCF;"></div>
<div style="left:446px;top:485px;width:438px;height:1px;background:#C6C6C6;"></div>
<div style="left:446px;top:486px;width:438px;height:19.5px;background:#D2D2D2;"></div>
<div style="left:458px;top:485.5px;width:7px;height:20px;background:#DCDCDC;"></div>
<div style="left:484px;top:485.5px;width:7px;height:20px;background:#DCDCDC;"></div>
<div style="left:510px;top:485.5px;width:7px;height:20px;background:#DCDCDC;"></div>
<div style="left:536px;top:485.5px;width:7px;height:20px;background:#DCDCDC;"></div>
<div style="left:562px;top:485.5px;width:7px;height:20px;background:#DCDCDC;"></div>
<div style="left:588px;top:485.5px;width:7px;height:20px;background:#DCDCDC;"></div>
<div style="left:613px;top:485.5px;width:7px;height:20px;background:#DCDCDC;"></div>
<div style="left:639px;top:485.5px;width:7px;height:20px;background:#DCDCDC;"></div>
<div style="left:665px;top:485.5px;width:7px;height:20px;background:#DCDCDC;"></div>
<div style="left:691px;top:485.5px;width:7px;height:20px;background:#DCDCDC;"></div>
<div style="left:717px;top:485.5px;width:7px;height:20px;background:#DCDCDC;"></div>
<div style="left:743px;top:485.5px;width:7px;height:20px;background:#DCDCDC;"></div>
<div style="left:769px;top:485.5px;width:7px;height:20px;background:#DCDCDC;"></div>
<div style="left:795px;top:485.5px;width:7px;height:20px;background:#DCDCDC;"></div>
<div style="left:820px;top:485.5px;width:7px;height:20px;background:#DCDCDC;"></div>
<div style="left:846px;top:485.5px;width:7px;height:20px;background:#DCDCDC;"></div>
<div style="left:872px;top:485.5px;width:7px;height:20px;background:#DCDCDC;"></div>
<div style="left:446px;top:490px;width:438px;height:1px;background:#BEBEBE;"></div>
<div style="left:446px;top:494px;width:438px;height:1px;background:#DADADA;"></div>
<div style="left:446px;top:498px;width:438px;height:1px;background:#C0C0C0;"></div>
<div style="left:446px;top:502px;width:438px;height:1px;background:#DADADA;"></div>
<div style="left:446px;top:504.5px;width:438px;height:1px;background:#CACACA;"></div>
<div style="left:465px;top:474px;width:1px;height:11px;background:#C2C2C2;"></div>
<div style="left:467px;top:474px;width:1px;height:11px;background:#E6E6E6;"></div>
<div style="left:491px;top:474px;width:1px;height:11px;background:#C2C2C2;"></div>
<div style="left:493px;top:474px;width:1px;height:11px;background:#E6E6E6;"></div>
<div style="left:517px;top:474px;width:1px;height:11px;background:#C2C2C2;"></div>
<div style="left:519px;top:474px;width:1px;height:11px;background:#E6E6E6;"></div>
<div style="left:543px;top:474px;width:1px;height:11px;background:#C2C2C2;"></div>
<div style="left:545px;top:474px;width:1px;height:11px;background:#E6E6E6;"></div>
<div style="left:569px;top:474px;width:1px;height:11px;background:#C2C2C2;"></div>
<div style="left:571px;top:474px;width:1px;height:11px;background:#E6E6E6;"></div>
<div style="left:595px;top:474px;width:1px;height:11px;background:#C2C2C2;"></div>
<div style="left:597px;top:474px;width:1px;height:11px;background:#E6E6E6;"></div>
<div style="left:620px;top:474px;width:1px;height:11px;background:#C2C2C2;"></div>
<div style="left:622px;top:474px;width:1px;height:11px;background:#E6E6E6;"></div>
<div style="left:646px;top:474px;width:1px;height:11px;background:#C2C2C2;"></div>
<div style="left:648px;top:474px;width:1px;height:11px;background:#E6E6E6;"></div>
<div style="left:672px;top:474px;width:1px;height:11px;background:#C2C2C2;"></div>
<div style="left:674px;top:474px;width:1px;height:11px;background:#E6E6E6;"></div>
<div style="left:698px;top:474px;width:1px;height:11px;background:#C2C2C2;"></div>
<div style="left:700px;top:474px;width:1px;height:11px;background:#E6E6E6;"></div>
<div style="left:724px;top:474px;width:1px;height:11px;background:#C2C2C2;"></div>
<div style="left:726px;top:474px;width:1px;height:11px;background:#E6E6E6;"></div>
<div style="left:750px;top:474px;width:1px;height:11px;background:#C2C2C2;"></div>
<div style="left:752px;top:474px;width:1px;height:11px;background:#E6E6E6;"></div>
<div style="left:776px;top:474px;width:1px;height:11px;background:#C2C2C2;"></div>
<div style="left:778px;top:474px;width:1px;height:11px;background:#E6E6E6;"></div>
<div style="left:802px;top:474px;width:1px;height:11px;background:#C2C2C2;"></div>
<div style="left:804px;top:474px;width:1px;height:11px;background:#E6E6E6;"></div>
<div style="left:827px;top:474px;width:1px;height:11px;background:#C2C2C2;"></div>
<div style="left:829px;top:474px;width:1px;height:11px;background:#E6E6E6;"></div>
<div style="left:853px;top:474px;width:1px;height:11px;background:#C2C2C2;"></div>
<div style="left:855px;top:474px;width:1px;height:11px;background:#E6E6E6;"></div>
<div style="left:879px;top:474px;width:1px;height:11px;background:#C2C2C2;"></div>
<div style="left:881px;top:474px;width:1px;height:11px;background:#E6E6E6;"></div>
<div style="left:543px;top:462px;width:1px;height:11px;background:#C2C2C2;"></div>
<div style="left:545px;top:462px;width:1px;height:11px;background:#E6E6E6;"></div>
<div style="left:544px;top:485.5px;width:1px;height:20px;background:#BEBEBE;"></div>
<div style="left:657px;top:462px;width:1px;height:11px;background:#C2C2C2;"></div>
<div style="left:659px;top:462px;width:1px;height:11px;background:#E6E6E6;"></div>
<div style="left:658px;top:485.5px;width:1px;height:20px;background:#BEBEBE;"></div>
<div style="left:768px;top:462px;width:1px;height:11px;background:#C2C2C2;"></div>
<div style="left:770px;top:462px;width:1px;height:11px;background:#E6E6E6;"></div>
<div style="left:769px;top:485.5px;width:1px;height:20px;background:#BEBEBE;"></div>
<div style="left:447px;top:485.5px;width:1px;height:20px;background:#7A7A7A;"></div>
<div class="t s" style="left:446.60px;top:464.00px;font-size:7.6px;line-height:7.6px;color:#303030;transform:scaleX(0.947);transform-origin:0 0;">April</div>
<div class="t s" style="left:546.80px;top:464.00px;font-size:7.6px;line-height:7.6px;color:#303030;transform:scaleX(0.835);transform-origin:0 0;">May</div>
<div class="t s" style="left:660.50px;top:464.00px;font-size:7.6px;line-height:7.6px;color:#303030;transform:scaleX(0.849);transform-origin:0 0;">June</div>
<div class="t s" style="left:771.50px;top:464.00px;font-size:7.6px;line-height:7.6px;color:#303030;transform:scaleX(0.887);transform-origin:0 0;">July</div>
<div class="t s" style="left:447.50px;top:477.00px;font-size:7.6px;line-height:7.6px;color:#303030;transform:scaleX(0.830);transform-origin:0 0;">3</div>
<div class="t s" style="left:468.80px;top:477.00px;font-size:7.6px;line-height:7.6px;color:#303030;transform:scaleX(0.865);transform-origin:0 0;">10</div>
<div class="t s" style="left:494.80px;top:477.00px;font-size:7.6px;line-height:7.6px;color:#303030;transform:scaleX(0.865);transform-origin:0 0;">17</div>
<div class="t s" style="left:520.80px;top:477.00px;font-size:7.6px;line-height:7.6px;color:#303030;transform:scaleX(0.865);transform-origin:0 0;">24</div>
<div class="t s" style="left:546.80px;top:477.00px;font-size:7.6px;line-height:7.6px;color:#303030;transform:scaleX(0.830);transform-origin:0 0;">1</div>
<div class="t s" style="left:572.80px;top:477.00px;font-size:7.6px;line-height:7.6px;color:#303030;transform:scaleX(0.830);transform-origin:0 0;">8</div>
<div class="t s" style="left:598.80px;top:477.00px;font-size:7.6px;line-height:7.6px;color:#303030;transform:scaleX(0.865);transform-origin:0 0;">15</div>
<div class="t s" style="left:623.80px;top:477.00px;font-size:7.6px;line-height:7.6px;color:#303030;transform:scaleX(0.865);transform-origin:0 0;">22</div>
<div class="t s" style="left:649.80px;top:477.00px;font-size:7.6px;line-height:7.6px;color:#303030;transform:scaleX(0.865);transform-origin:0 0;">29</div>
<div class="t s" style="left:675.80px;top:477.00px;font-size:7.6px;line-height:7.6px;color:#303030;transform:scaleX(0.830);transform-origin:0 0;">5</div>
<div class="t s" style="left:701.80px;top:477.00px;font-size:7.6px;line-height:7.6px;color:#303030;transform:scaleX(0.865);transform-origin:0 0;">12</div>
<div class="t s" style="left:727.80px;top:477.00px;font-size:7.6px;line-height:7.6px;color:#303030;transform:scaleX(0.865);transform-origin:0 0;">19</div>
<div class="t s" style="left:753.80px;top:477.00px;font-size:7.6px;line-height:7.6px;color:#303030;transform:scaleX(0.865);transform-origin:0 0;">26</div>
<div class="t s" style="left:779.80px;top:477.00px;font-size:7.6px;line-height:7.6px;color:#303030;transform:scaleX(0.830);transform-origin:0 0;">3</div>
<div class="t s" style="left:805.80px;top:477.00px;font-size:7.6px;line-height:7.6px;color:#303030;transform:scaleX(0.865);transform-origin:0 0;">10</div>
<div class="t s" style="left:830.80px;top:477.00px;font-size:7.6px;line-height:7.6px;color:#303030;transform:scaleX(0.865);transform-origin:0 0;">17</div>
<div class="t s" style="left:856.80px;top:477.00px;font-size:7.6px;line-height:7.6px;color:#303030;transform:scaleX(0.865);transform-origin:0 0;">24</div>
<div class="t s" style="left:882.80px;top:477.00px;font-size:7.6px;line-height:7.6px;color:#303030;transform:scaleX(0.830);transform-origin:0 0;clip-path:inset(0 1.5px 0 0)">3</div>
<div style="left:446px;top:505.5px;width:438px;height:10.5px;background:#F0F0F0;"></div>
<div style="left:455px;top:507px;width:15.5px;height:9px;background:#CDCDCD;"></div>
<svg style="position:absolute;left:446px;top:507px;" width="6" height="9" viewBox="0 0 6 9"><path d="M4.3 1.5 L1.8 4.5 L4.3 7.5" fill="none" stroke="#505050" stroke-width="1.2"/></svg>
<svg style="position:absolute;left:876px;top:507px;" width="6" height="9" viewBox="0 0 6 9"><path d="M1.7 1.5 L4.2 4.5 L1.7 7.5" fill="none" stroke="#505050" stroke-width="1.2"/></svg>
<div style="left:2px;top:461px;width:1px;height:56px;background:#A0A0A0;"></div>
<div style="left:884px;top:460px;width:1px;height:57px;background:#A0A0A0;"></div>
<div style="left:2px;top:516px;width:882px;height:1px;background:#B4B4B4;"></div>
<div style="left:1px;top:517px;width:884px;height:1px;background:#6F8FB0;"></div>
<div style="left:1px;top:518px;width:884px;height:12px;background:#0072C6;"></div>
<div style="left:794px;top:524.5px;width:5px;height:1.5px;background:#FFFFFF;"></div>
<div style="left:800.5px;top:524.8px;width:63.5px;height:0.6px;background:#5FA0DA;"></div>
<div style="left:831px;top:521.7px;width:2px;height:7px;background:#FFFFFF;"></div>
<div style="left:866.3px;top:524.5px;width:5px;height:1px;background:#FFFFFF;"></div>
<div style="left:868.3px;top:522.5px;width:1px;height:5px;background:#FFFFFF;"></div>
<div style="left:786px;top:518px;width:98px;height:12px;box-sizing:border-box;border:1px solid #F0262B;background:transparent;"></div>
<div style="left:784px;top:530px;width:100px;height:1px;background:#F0262B;"></div>
<div class="t" style="left:773.40px;top:520.00px;font-size:10.2px;line-height:10.2px;color:#D42C44;transform:scaleX(0.848);transform-origin:0 0;-webkit-text-stroke:0.45px currentColor">5</div>
<div style="left:1px;top:34px;width:883px;height:61px;box-sizing:border-box;border:1px solid #F0262B;background:transparent;"></div>
<div style="left:2px;top:35px;width:1px;height:59px;background:#E04858;"></div>
<div class="t" style="left:872.70px;top:79.00px;font-size:11.5px;line-height:11.5px;color:#F0262B;transform:scaleX(0.674);transform-origin:0 0;font-family:"Liberation Serif",serif;font-weight:bold">1</div>
</body></html>
